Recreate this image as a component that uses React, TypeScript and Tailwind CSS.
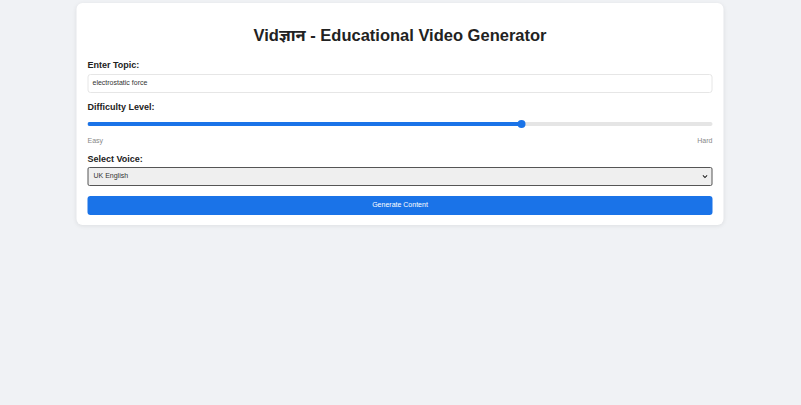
import React from 'react';

export default function App() {
  const value = 0.695;

  return (
    <div className="min-h-[405px] bg-[#f0f2f5] pt-[3px]" style={{ fontFamily: '"Liberation Sans", Arial, "Noto Sans", sans-serif' }}>
      <div className="mx-auto w-[647px] -translate-x-[0.5px] rounded-md bg-white px-[11px] pt-[21px] pb-[10px] shadow-[0_1px_4px_rgba(0,0,0,0.08)]">
        <h1 className="text-center text-[16.5px] font-bold leading-[22px] text-[#222]">Vidज्ञान - Educational Video Generator</h1>

        <div className="mt-[14px]">
          <label className="block text-[9px] font-bold leading-[11px] text-[#222]">Enter Topic:</label>
          <div className="mt-[3px] flex h-[19px] items-center rounded-[3px] border border-[#e6e6e6] px-[4px] text-[7px] text-[#333]">
            electrostatic force
          </div>
        </div>

        <div className="mt-[9px]">
          <label className="block text-[9px] font-bold leading-[11px] text-[#222]">Difficulty Level:</label>
          <div className="relative mt-[8px] h-[6px]">
            <div className="absolute top-[1px] left-0 right-0 flex h-[4px] overflow-hidden rounded-full bg-[#e5e5e5]">
              <div className="h-full bg-[#1a73e8]" style={{ width: `${value * 100}%` }} />
            </div>
            <div
              className="absolute top-[-1px] h-[8px] w-[8px] -translate-x-1/2 rounded-full bg-[#1a73e8]"
              style={{ left: `${value * 100}%` }}
            />
          </div>
          <div className="mt-[9px] flex justify-between text-[7px] leading-[9px] text-[#888]">
            <span>Easy</span>
            <span>Hard</span>
          </div>
        </div>

        <div className="mt-[9px]">
          <label className="block text-[9px] font-bold leading-[11px] text-[#222]">Select Voice:</label>
          <div className="mt-[2px] flex h-[19px] items-center justify-between rounded-[2px] border border-[#555] bg-[#efefef] pr-[3px] pl-[5px] text-[7px] text-[#333]">
            <span>UK English</span>
            <svg width="7" height="7" viewBox="0 0 10 10" fill="none" stroke="#222" strokeWidth="1.6">
              <path d="M2 3.5 L5 6.5 L8 3.5" />
            </svg>
          </div>
        </div>

        <button className="mt-[10px] flex h-[19px] w-full items-center justify-center rounded-[3px] bg-[#1a73e8] text-[7px] text-white">
          Generate Content
        </button>
      </div>
    </div>
  );
}
